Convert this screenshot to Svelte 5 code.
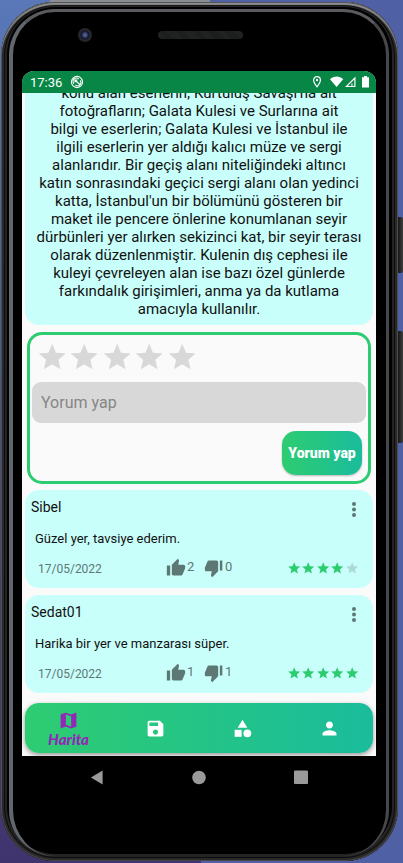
<script>
  const lines = [
    "konu alan eserlerin; Kurtuluş Savaşı'na ait",
    'fotoğrafların; Galata Kulesi ve Surlarına ait',
    'bilgi ve eserlerin; Galata Kulesi ve İstanbul ile',
    'ilgili eserlerin yer aldığı kalıcı müze ve sergi',
    'alanlarıdır. Bir geçiş alanı niteliğindeki altıncı',
    'katın sonrasındaki geçici sergi alanı olan yedinci',
    "katta, İstanbul'un bir bölümünü gösteren bir",
    'maket ile pencere önlerine konumlanan seyir',
    'dürbünleri yer alırken sekizinci kat, bir seyir terası',
    'olarak düzenlenmiştir. Kulenin dış cephesi ile',
    'kuleyi çevreleyen alan ise bazı özel günlerde',
    'farkındalık girişimleri, anma ya da kutlama',
    'amacıyla kullanılır.'
  ];
  const reviews = [
    { name: 'Sibel', text: 'Güzel yer, tavsiye ederim.', date: '17/05/2022', up: 2, down: 0, stars: 4 },
    { name: 'Sedat01', text: 'Harika bir yer ve manzarası süper.', date: '17/05/2022', up: 1, down: 1, stars: 5 }
  ];
  const five = [1, 2, 3, 4, 5];
  let rating = $state(0);
  let comment = $state('');
</script>

{#snippet star()}
  <svg viewBox="0 0 24 24" aria-hidden="true"><path d="M12 17.27 18.18 21l-1.64-7.03L22 9.24l-7.19-.61L12 2 9.19 8.63 2 9.24l5.46 4.73L5.82 21z" /></svg>
{/snippet}

<div class="desk">
  <div class="keys"><i class="power"></i><i class="volume"></i></div>
  <div class="phone">
    <div class="forehead">
      <span class="camera"></span>
      <span class="speaker"></span>
    </div>

    <div class="screen">
      <header class="status">
        <span>17:36</span>
        <svg class="sync" viewBox="0 0 14 14"><g fill="none" stroke="#fff"><circle cx="7" cy="7" r="5.600" stroke-width="1.100" /><path d="M3.900 8.800A3.300 3.300 0 0 1 8.800 4.100M10.100 5.400A3.300 3.300 0 0 1 5.400 10" stroke-width="1.100" /><path d="M5 5l5 4.800M5 7.400V5h2.400" stroke-width="1.200" /></g></svg>
        <span class="grow"></span>
        <svg class="pin" viewBox="0 0 10 14"><path d="M5 1.600A3.400 3.400 0 0 0 1.600 5C1.600 7.600 5 11.800 5 11.800S8.400 7.600 8.400 5A3.400 3.400 0 0 0 5 1.600z" fill="none" stroke="#fff" stroke-width="1.200" /><circle cx="5" cy="5" r="1.200" fill="#fff" /></svg>
        <svg class="signals" viewBox="0 0 40 14"><path d="M0 4.300C3.700.6 9.500.6 13.200 4.300L6.600 12z" /><path fill-rule="evenodd" d="M25.500 1.500v10.500H15zM24.300 4.400l-6.500 6.500h3.600V8.500h1.100v2.400h1.800z" /><path d="M34 1h3v1.300h2V12.500h-7V2.300h2z" /></svg>
      </header>

      <main>
        <article class="about">
          <p>{#each lines as line}{line}<br />{/each}</p>
        </article>

        <form class="compose" onsubmit={(e) => e.preventDefault()}>
          <div class="rate">
            {#each five as n}
              <button type="button" class:on={n <= rating} aria-label="{n} yıldız" onclick={() => (rating = n)}>{@render star()}</button>
            {/each}
          </div>
          <input type="text" aria-label="Yorum yap" placeholder="Yorum yap" bind:value={comment} />
          <button class="send" type="submit">Yorum yap</button>
        </form>

        {#each reviews as r}
          <article class="review">
            <div class="top">
              <h2>{r.name}</h2>
              <button class="more" aria-label="Seçenekler"><svg viewBox="0 0 4 16"><circle cx="2" cy="2" r="2" /><circle cx="2" cy="7.500" r="2" /><circle cx="2" cy="13" r="2" /></svg></button>
            </div>
            <p>{r.text}</p>
            <div class="foot">
              <time>{r.date}</time>
              <button class="vote" aria-label="Beğen {r.up}"><svg viewBox="0 0 24 24"><path d="M1 21h4V9H1v12zm22-11c0-1.100-.9-2-2-2h-6.310l.95-4.570.03-.32c0-.41-.17-.79-.44-1.060L14.170 1 7.590 7.590C7.220 7.950 7 8.450 7 9v10c0 1.100.9 2 2 2h9c.83 0 1.540-.5 1.840-1.220l3.020-7.050c.09-.23.14-.47.14-.73v-2z" /></svg><span>{r.up}</span></button>
              <button class="vote" aria-label="Beğenme {r.down}"><svg viewBox="0 0 24 24"><path d="M15 3H6c-.83 0-1.540.5-1.840 1.220l-3.020 7.050c-.09.23-.14.47-.14.73v2c0 1.100.9 2 2 2h6.310l-.95 4.570-.03.32c0 .41.17.79.44 1.060L9.830 23l6.590-6.590c.36-.36.58-.86.58-1.410V5c0-1.100-.9-2-2-2zm4 0v12h3V3h-3z" /></svg><span>{r.down}</span></button>
              <div class="score" role="img" aria-label="{r.stars} / 5">
                {#each five as n}<span class:off={n > r.stars}>{@render star()}</span>{/each}
              </div>
            </div>
          </article>
        {/each}
      </main>

      <nav class="tabs">
        <a href="#harita" class="active">
          <svg viewBox="0 0 24 24"><path d="m20.500 3-.16.030L15 5.100 9 3 3.360 4.900c-.21.070-.36.250-.36.480V20.500c0 .28.22.5.5.5l.16-.030L9 18.900l6 2.100 5.640-1.900c.21-.070.36-.25.36-.48V3.500c0-.28-.22-.5-.5-.5zM15 19l-6-2.110V5l6 2.110V19z" /></svg>
          <span>Harita</span>
        </a>
        <a href="#kayitlar" aria-label="Kaydedilenler"><svg viewBox="0 0 24 24"><path d="M17 3H5c-1.110 0-2 .9-2 2v14c0 1.100.89 2 2 2h14c1.100 0 2-.9 2-2V7l-4-4zm-5 16c-1.660 0-3-1.340-3-3s1.340-3 3-3 3 1.340 3 3-1.340 3-3 3zm3-10H5V5h10v4z" /></svg></a>
        <a href="#kategori" aria-label="Kategoriler"><svg viewBox="0 0 24 24"><path d="m12 2-5.500 9h11z" /><circle cx="17.500" cy="17.500" r="4.500" /><path d="M3 13.500h8v8H3z" /></svg></a>
        <a href="#profil" aria-label="Profil"><svg viewBox="0 0 24 24"><path d="M12 12c2.210 0 4-1.790 4-4s-1.790-4-4-4-4 1.790-4 4 1.790 4 4 4zm0 2c-2.670 0-8 1.340-8 4v2h16v-2c0-2.660-5.330-4-8-4z" /></svg></a>
      </nav>
    </div>

    <div class="system">
      <button aria-label="Geri"><svg viewBox="0 0 14 16"><path d="M13 .5v15L.5 8z" /></svg></button>
      <button aria-label="Ana ekran"><svg viewBox="0 0 14 14"><circle cx="7" cy="7" r="6.800" /></svg></button>
      <button aria-label="Son uygulamalar"><svg viewBox="0 0 14 14"><rect width="14" height="13.500" rx="1" /></svg></button>
    </div>
  </div>
</div>

<style>
  :global(body) { margin: 0; }
  .desk, .desk * { box-sizing: border-box; }
  .desk {
    position: relative;
    min-height: 100vh;
    padding: 2px 5px 2px 1px;
    display: flex;
    font-family: Roboto, "Liberation Sans", sans-serif;
    background:
      linear-gradient(#8a8d90, #8a8d90) 50px 0 / 160px 2px no-repeat,
      linear-gradient(90deg, transparent 50%, #5060a4 50%) 0 0 / 100% 100% no-repeat,
      linear-gradient(#5a78b8, #4761a4 30%, #43406f 70%, #40346e);
  }
  button { border: 0; padding: 0; background: none; font: inherit; color: inherit; display: block; }
  svg { display: block; fill: currentColor; }

  .keys { position: absolute; right: 0; top: 217px; width: 6px; }
  .keys i { display: block; background: linear-gradient(90deg, #111, #3c3c3c); border-radius: 0 2px 2px 0; }
  .power { height: 56px; }
  .volume { height: 112px; margin-top: 58px; }

  .phone {
    position: relative;
    flex: 1;
    min-width: 0;
    padding: 0 22px 0 21px;
    border-radius: 54px;
    display: flex;
    flex-direction: column;
    background: #000;
    box-shadow:
      inset 0 1px 0 #555,
      inset 0 3px 1px #8c8d8f,
      inset 0 0 0 1px #484848,
      inset 0 0 0 3px #292929,
      inset 0 0 0 4px #0c0c0c,
      inset 0 -1px 0 6px #242424;
  }
  /* polished edge of the glass, fading out towards the chin */
  .phone::before {
    content: "";
    position: absolute;
    inset: 7px 9px 5px 8px;
    border: solid;
    border-width: 3px 3px 0 4px;
    border-color: #5a5b5f #47484b transparent #62666d;
    border-radius: 46px;
    pointer-events: none;
  }
  .forehead {
    height: 69px;
    display: grid;
    grid-template-columns: 1fr 85px 1fr;
    align-items: start;
    padding: 26px 0 0 2px;
  }
  .camera {
    width: 14px;
    height: 14px;
    margin-right: 12px;
    justify-self: center;
    border-radius: 50%;
    background: radial-gradient(circle, #54618f 0 1px, #20284f 3px, #111629 4px, #25272a 5px);
  }
  .speaker {
    height: 8px;
    margin-top: 3px;
    border-radius: 4px;
    background: repeating-linear-gradient(45deg, #232625 0 1px, #191b1b 1px 2px);
  }

  .screen {
    flex: 1;
    display: flex;
    flex-direction: column;
    background: #fafafa;
    border-radius: 12px 12px 0 0;
    overflow: hidden;
  }
  .status {
    height: 22px;
    padding: 0 6px 0 8px;
    display: flex;
    align-items: center;
    color: #fff;
    background: #078645;
    font-size: 13px;
  }
  .grow { flex: 1; }
  .sync { width: 14px; height: 14px; margin-left: 8px; }
  .pin { width: 10px; height: 14px; }
  .signals { width: 40px; height: 14px; margin-left: 8px; }

  main { flex: 1; overflow: hidden; padding: 0 3px; }
  .about {
    padding-bottom: 7px;
    background: #c9fffb;
    border-radius: 0 0 14px 14px;
    overflow: hidden;
  }
  .about p {
    margin: -9px 0 0;
    font-size: 15px;
    line-height: 18px;
    text-align: center;
    white-space: nowrap;
    color: #111;
  }

  .compose {
    margin: 7px 2px 6px;
    padding: 6px 2px;
    border: 3px solid #2ecc71;
    border-radius: 15px;
    display: flex;
    flex-direction: column;
  }
  .rate { display: flex; width: 162px; margin-left: 4px; color: #d8d8d8; }
  .rate button { flex: 1; }
  .rate .on { color: #2ecc71; }
  .compose input {
    width: 100%;
    height: 41px;
    margin-top: 9px;
    padding: 0 9px;
    border: 0;
    border-radius: 9px;
    background: #d8d8d8;
    font: 16px Roboto, "Liberation Sans", sans-serif;
    color: #222;
  }
  .compose input::placeholder { color: #868686; opacity: 1; }
  .send {
    align-self: flex-end;
    width: 80px;
    height: 44px;
    margin: 8px 4px 0 0;
    border-radius: 14px;
    background: linear-gradient(90deg, #2ecc71, #1abc9c);
    box-shadow: 0 1px 2px #0004;
    color: #fff;
    font-size: 14px;
    font-weight: 900;
    white-space: nowrap;
  }

  .review {
    margin-bottom: 7px;
    padding: 8px 14px 8px 6px;
    background: #c9fffb;
    border-radius: 14px;
    color: #111;
  }
  .top { display: flex; justify-content: space-between; }
  h2 { margin: 0; font-size: 14px; line-height: 18px; font-weight: 400; }
  .more { width: 4px; margin: 4px 3px 0 0; height: 14px; color: #5d7874; }
  .more svg { width: 4px; height: 16px; }
  .review p { margin: 14px 4px 0; font-size: 13px; line-height: 18px; }
  .foot { display: flex; align-items: center; margin-top: 8px; height: 24px; color: #5d7874; font-size: 12px; }
  time { width: 103px; padding: 2px 0 0 7px; margin-right: 32px; }
  .vote { width: 38px; display: flex; align-items: center; font-size: 13px; }
  .vote svg { width: 20px; height: 20px; }
  .vote span { padding: 0 0 3px 1px; }
  .score { margin-left: auto; display: flex; width: 72px; color: #2ecc71; }
  .score span { flex: 1; }
  .score .off { color: #addad8; }

  .tabs {
    height: 50px;
    margin: 2px 3px 3px;
    display: flex;
    border-radius: 14px;
    background: linear-gradient(90deg, #2ecc71, #1abc9c);
    box-shadow: 0 2px 5px #0006;
  }
  .tabs a {
    flex: 1;
    display: flex;
    flex-direction: column;
    align-items: center;
    justify-content: center;
    color: #fff;
    text-decoration: none;
  }
  .tabs svg { width: 21px; height: 21px; }
  .tabs .active { color: #9327b8; }
  .tabs span { font: italic 900 15px/16px Lato, sans-serif; }

  .system {
    height: 105px;
    padding: 14px 24px 0;
    display: grid;
    grid-template-columns: repeat(3, 1fr);
    justify-items: center;
    align-items: start;
    color: #9a9a9a;
  }
  .system svg { width: 14px; height: 15px; }
</style>
